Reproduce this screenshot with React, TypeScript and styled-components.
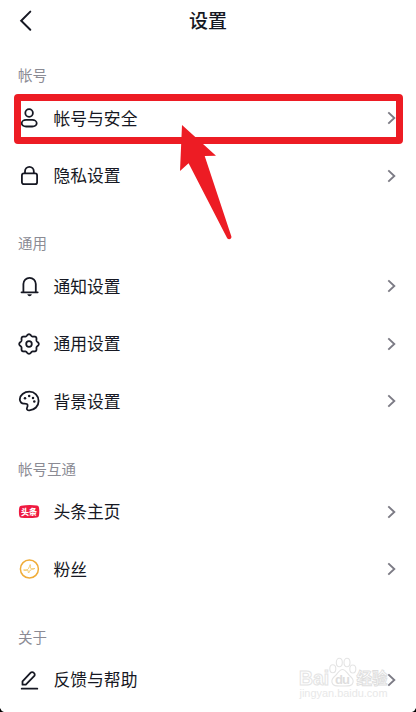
import React from 'react';
import styled, { createGlobalStyle } from 'styled-components';

const GlobalStyle = createGlobalStyle`
  body { margin: 0; background: #fff; overflow: hidden; }
`;

const Screen = styled.main`
  position: relative;
  width: 416px;
  height: 712px;
  overflow: hidden;
  background: #fff;
  color: #161823;
  font-family: 'Noto Sans CJK SC', 'Noto Sans', sans-serif;
`;

const TopBar = styled.header`
  display: grid;
  grid-template-columns: 48px 1fr 48px;
  align-items: center;
  height: 42px;
`;

const BackIcon = styled.svg`
  width: 14px;
  height: 22px;
  margin-left: 19px;
`;

const Title = styled.h1`
  margin: 0;
  padding-bottom: 2px;
  text-align: center;
  font-size: 19px;
  line-height: 40px;
  font-weight: 500;
`;

const Section = styled.section`
  padding-top: 20.8px;
  & + & { padding-top: 26.4px; }
`;

const SectionTitle = styled.h2`
  margin: 0;
  padding-left: 18px;
  height: 26.5px;
  line-height: 24px;
  font-size: 14.5px;
  font-weight: 400;
  color: #8b8b94;
`;

const Row = styled.div`
  display: flex;
  align-items: center;
  height: 57.6px;
  padding: 0 20px 0 17px;
`;

const Icon = styled.svg`
  flex: none;
  width: 24px;
  height: 24px;
  margin-right: 12.5px;
  overflow: visible;
  fill: none;
  stroke: #161823;
  stroke-width: 1.8;
  stroke-linecap: round;
  stroke-linejoin: round;
`;

const Label = styled.span`
  flex: 1;
  padding-bottom: 1px;
  font-size: 16.8px;
  line-height: 24px;
`;

const Chevron = styled.svg`
  width: 9px;
  height: 14px;
  fill: none;
  stroke: #7c7b85;
  stroke-width: 1.9;
`;

const Highlight = styled.div`
  position: absolute;
  left: 14px;
  top: 94px;
  width: 389px;
  height: 50px;
  box-sizing: border-box;
  border: 7px solid #ed1c24;
  border-radius: 4px;
`;

const Pointer = styled.svg`
  position: absolute;
  left: 176px;
  top: 120px;
`;

const Watermark = styled.svg`
  position: absolute;
  left: 294px;
  top: 654px;
  font-family: 'Liberation Sans', 'Noto Sans CJK SC', sans-serif;
`;

const Corner = styled.svg<{ $right?: boolean }>`
  position: absolute;
  bottom: 0;
  ${p => (p.$right ? 'right: 0; transform: scaleX(-1);' : 'left: 0;')}
`;

const gearPath = (() => {
  const points: string[] = [];
  for (let i = 0; i <= 128; i++) {
    const a = (i / 128) * Math.PI * 2;
    const r = 9 + 0.8 * Math.cos(8 * a);
    points.push(`${(12 + r * Math.sin(a)).toFixed(2)} ${(12 - r * Math.cos(a)).toFixed(2)}`);
  }
  return `M${points.join('L')}Z`;
})();

const icons: Record<string, React.ReactNode> = {
  user: (
    <>
      <circle cx="12.1" cy="7" r="3.8" />
      <rect x="4.7" y="13.9" width="15" height="6.6" rx="4.4" ry="3.3" />
    </>
  ),
  lock: (
    <>
      <rect x="4.9" y="9.4" width="15.2" height="10.8" rx="2" />
      <path d="M8 9.2V7.2a4.4 4.4 0 0 1 8.8 0v2" />
    </>
  ),
  bell: (
    <>
      <path d="M4.5 18.3h16.2M6.4 18.1V10a6.2 6.2 0 0 1 12.4 0v8.1" />
      <path d="M10.3 20.2h4.6c-.4 1.3-1.2 2-2.3 2s-1.9-.7-2.3-2z" fill="#161823" stroke="none" />
    </>
  ),
  gear: (
    <>
      <path d={gearPath} />
      <circle cx="12" cy="12" r="2.8" />
    </>
  ),
  palette: (
    <>
      <path d="M12.4 2.7C7.1 2.7 2.8 6.3 2.8 10.2c0 2.8 1.9 4.5 4.3 4.4 2.4-.1 3.8.2 3.5 2.3-.2 1.6-1.1 2.2-.7 3.3.3.8 1.5 1.3 2.5 1.2 5.2-.4 9.2-4.2 9.2-9.4 0-5.2-4-9.3-9.2-9.3z" />
      <g fill="#161823" stroke="none">
        <circle cx="8" cy="9.2" r="1.25" />
        <circle cx="12.2" cy="6.9" r="1.25" />
        <circle cx="16" cy="9" r="1.25" />
        <circle cx="17.3" cy="12.6" r="1.25" />
      </g>
    </>
  ),
  toutiao: (
    <>
      <path d="M4.2 5.7Q12 4.6 20 5.500q1.600.2 1.900 1.700.8 4.300 0 8.500-.3 1.600-1.900 1.800-8 .9-15.800.2-1.600-.2-1.900-1.800-.8-4.300 0-8.500.3-1.500 1.900-1.700z" fill="#ef1940" stroke="none" />
      <text x="12" y="14.7" textAnchor="middle" fontSize="8" fontWeight="900" fill="#fff" stroke="none">头条</text>
    </>
  ),
  fans: (
    <>
      <circle cx="12.4" cy="12" r="9" stroke="#f0ac38" strokeWidth="1.5" />
      <path d="M7 13.1c2.2.1 3.6-.3 4.5-1.5.8-1.1.9-2.7 1.7-4 .7 1.3.2 2.8.3 3.6.9.6 2.9.2 4.3.3-1.4 1.1-3.2.8-4.4 1.500-.9.7-.9 2-1.700 3-.9-.9-.2-2.100-.7-2.700-.9-.5-2.700.3-4-.2z" stroke="#f3c45c" strokeWidth=".9" />
    </>
  ),
  pencil: (
    <>
      <path d="M4.7 20.7h15.6" />
      <path d="M5.5 16.7V13.3l8.2-8.600a2 2 0 0 1 2.900 0l.5.500a2 2 0 0 1 0 2.900l-8.300 8.600z" />
    </>
  ),
};

const sections = [
  { title: '帐号', rows: [['user', '帐号与安全'], ['lock', '隐私设置']] },
  { title: '通用', rows: [['bell', '通知设置'], ['gear', '通用设置'], ['palette', '背景设置']] },
  { title: '帐号互通', rows: [['toutiao', '头条主页'], ['fans', '粉丝']] },
  { title: '关于', rows: [['pencil', '反馈与帮助']] },
];

export default function App() {
  return (
    <Screen>
      <GlobalStyle />
      <TopBar>
        <BackIcon viewBox="0 0 14 22" fill="none" stroke="#161823" strokeWidth="2" strokeLinecap="round">
          <path d="M11.3 1.6 2.2 10.7l9.1 9.1" />
        </BackIcon>
        <Title>设置</Title>
      </TopBar>
      {sections.map(section => (
        <Section key={section.title}>
          <SectionTitle>{section.title}</SectionTitle>
          {section.rows.map(([icon, label]) => (
            <Row key={label}>
              <Icon viewBox="0 0 24 24">{icons[icon]}</Icon>
              <Label>{label}</Label>
              <Chevron viewBox="0 0 9 14"><path d="m1.3 1.4 6 5.6-6 5.6" /></Chevron>
            </Row>
          ))}
        </Section>
      ))}
      <Highlight />
      <Pointer width="60" height="124" viewBox="176 120 60 124">
        <path d="M182 125l34 30.7-11.3.3L231.4 236.500c.5 2.400-2.700 3.800-4.200 1.700L188.600 163.200 180 171z" fill="#ed1c24" />
      </Pointer>
      <Watermark width="100" height="50" viewBox="0 0 100 50">
        <g fill="#fff" stroke="#e4e4e4" strokeWidth="1.1">
          <text x="5" y="31" fontSize="21" fontWeight="700" textLength="30" lengthAdjust="spacingAndGlyphs">Bai</text>
          <ellipse cx="38.8" cy="14.8" rx="3" ry="4" />
          <ellipse cx="45.3" cy="8.5" rx="3" ry="4.2" />
          <ellipse cx="53" cy="8.5" rx="3" ry="4.2" />
          <ellipse cx="58.8" cy="15" rx="3" ry="4" />
          <path d="M48.5 15.500c-3 0-4.500 3.500-7 6-2.500 2-4.300 4-3.500 7 1 4 5 3.500 10.500 3.500s9.500.5 10.500-3.500c.8-3-1-5-3.500-7-2.500-2.500-4-6-7-6z" />
        </g>
        <text x="41" y="30" fontSize="13" fontWeight="700" textLength="15" fill="#dedede">du</text>
        <text x="62.5" y="30" fontSize="15.5" fontWeight="700" textLength="31" fill="#fff" stroke="#dedede" strokeWidth=".9">经验</text>
        <text x="5.5" y="43" fontSize="10.5" textLength="88" lengthAdjust="spacingAndGlyphs" fill="#e8e8e8">jingyan.baidu.com</text>
      </Watermark>
      <Corner width="4" height="4" viewBox="0 0 4 4"><path d="M0 0Q1 3 4 4H0z" fill="#000" /></Corner>
      <Corner $right width="4" height="4" viewBox="0 0 4 4"><path d="M0 0Q1 3 4 4H0z" fill="#000" /></Corner>
    </Screen>
  );
}
